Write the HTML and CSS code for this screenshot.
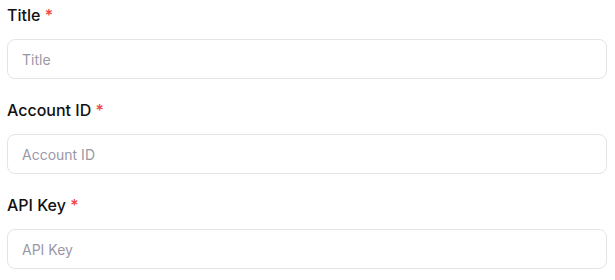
FILE: index.html
```html
<!DOCTYPE html>
<html lang="en">

<head>
    <meta charset="UTF-8">
    <title>Credentials</title>
    <link rel="stylesheet" href="styles.css">
</head>

<body>
    <form class="form">
        <div class="form-group">
            <label for="title">Title <span class="required">*</span></label>
            <input type="text" id="title" name="title" placeholder="Title">
        </div>
        <div class="form-group">
            <label for="accountId">Account ID <span class="required">*</span></label>
            <input type="text" id="accountId" name="accountId" placeholder="Account ID">
        </div>
        <div class="form-group">
            <label for="apiKey">API Key <span class="required">*</span></label>
            <input type="text" id="apiKey" name="apiKey" placeholder="API Key">
        </div>
    </form>
</body>

</html>
```

FILE: styles.css
```css
body {
    font-family: Inter, 'Noto Sans', sans-serif;
    background-color: #ffffff;
    margin: 0;
    padding: 0;
}

.form {
    width: 600px;
    padding: 0 8px 0 7px;
}

.form-group {
    display: flex;
    flex-direction: column;
    gap: 9px;
    margin-bottom: 16px;
}

.form-group label {
    font-size: 16px;
    line-height: 30px;
    font-weight: 500;
    color: #111111;
}

.required {
    color: #ef4444;
}

.form-group input {
    box-sizing: border-box;
    width: 100%;
    height: 40px;
    padding: 0 14px;
    font-family: inherit;
    font-size: 14px;
    color: #111111;
    border: 1px solid #e4e4e7;
    border-radius: 8px;
    outline: none;
}

.form-group input::placeholder {
    color: #9a98a6;
}
```
